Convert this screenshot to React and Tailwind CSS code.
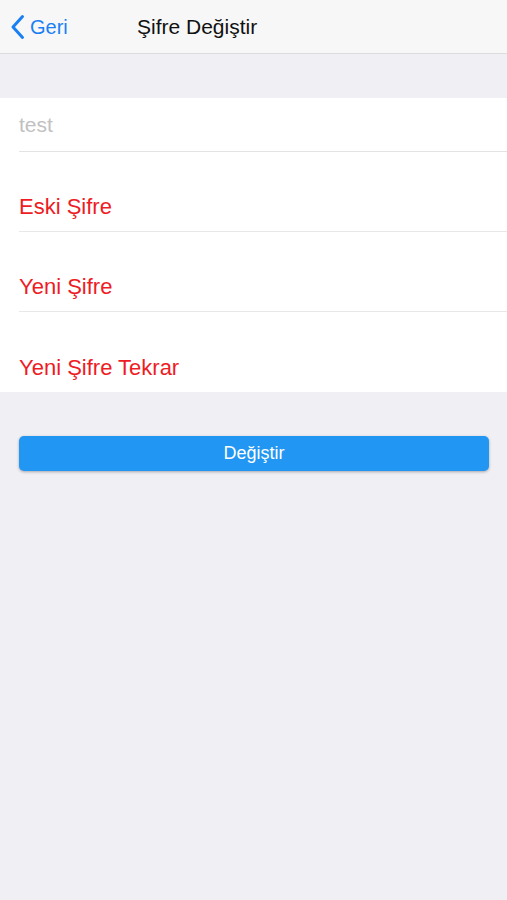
import React from 'react';

const fields = ['Eski Şifre', 'Yeni Şifre', 'Yeni Şifre Tekrar'];

const App = () => {
  return (
    <div className="min-h-[900px] bg-[#efeff4]" style={{ fontFamily: '"Liberation Sans", Arial, sans-serif' }}>
      {/* Nav bar */}
      <div className="h-[54px] bg-[#f7f7f7] border-b border-[#dcdcdf] flex items-center">
        <div className="flex items-center pl-[10px] text-[#1a7ff5] text-[20px] w-[137px]">
          <svg width="16" height="26" viewBox="0 0 16 26" fill="none">
            <path d="M12.5 2.5 L3 13 L12.5 23.5" stroke="#1a7ff5" strokeWidth="3" strokeLinecap="round" strokeLinejoin="round" />
          </svg>
          <span className="ml-[4px]">Geri</span>
        </div>
        <span className="text-[21px] text-[#111]">Şifre Değiştir</span>
      </div>

      {/* Form */}
      <div className="mt-[44px] bg-white">
        <div className="ml-[19px] h-[54px] flex items-center border-b border-[#e3e3e3]">
          <span className="text-[21px] text-[#c1c1c1]">test</span>
        </div>
        {fields.map((f, i) => (
          <div
            key={f}
            className={`ml-[19px] h-[80px] flex items-end pb-[8px] ${i < fields.length - 1 ? 'border-b border-[#e8e8e8]' : ''}`}
          >
            <span className="text-[22px] text-[#ee1c24]">{f}</span>
          </div>
        ))}
      </div>

      {/* Button */}
      <div className="px-[19px] pt-[44px]">
        <button className="w-[470px] h-[35px] rounded-[5px] bg-[#2196f3] text-white text-[18px] shadow-[0_1px_3px_rgba(0,0,0,0.3)]">
          Değiştir
        </button>
      </div>
    </div>
  );
};

export default App;
